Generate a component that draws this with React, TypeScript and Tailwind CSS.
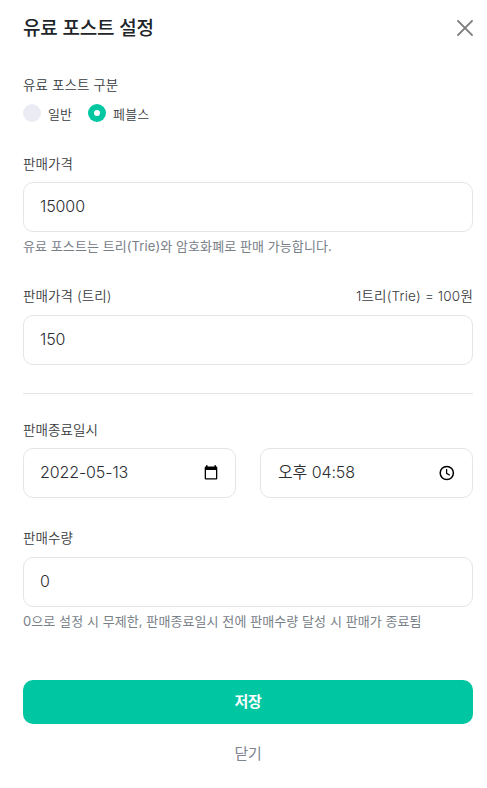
import React, { useState } from "react";

const fieldClass =
  "flex h-[50px] w-full items-center rounded-[10px] border border-[#e5e5e7] bg-white px-4 pb-0.5 text-[16px] font-[350] tracking-[-0.1px] text-[#2b2e33]";

function CloseIcon() {
  return (
    <svg width="16" height="16" viewBox="0 0 16 16" fill="none" stroke="#7c7c7e" strokeWidth="1.9">
      <path d="M0.4 0.4L15.6 15.6M15.6 0.4L0.4 15.6" />
    </svg>
  );
}

function CalendarIcon() {
  return (
    <svg className="mt-0.5" width="16" height="16" viewBox="0 0 16 16" fill="#000">
      <path d="M13 1.6V0.3h-1.6v1.3H4.6V0.3H3v1.3h-.2A1.1 1.1 0 0 0 1.7 2.7v10.7a1.1 1.1 0 0 0 1.1 1.1h10.4a1.1 1.1 0 0 0 1.1-1.1V2.7a1.1 1.1 0 0 0-1.1-1.1zM13 13.2H3V5h10z" />
    </svg>
  );
}

function ClockIcon() {
  return (
    <svg className="mt-0.5 mr-px" width="16" height="16" viewBox="0 0 16 16" fill="none" stroke="#000" strokeWidth="1.5">
      <circle cx="7.8" cy="8" r="6.6" />
      <path d="M7.6 4v4.3l3.2 2" strokeWidth="1.2" />
    </svg>
  );
}

function Radio({ checked }: { checked: boolean }) {
  if (!checked) return <span className="size-[18px] rounded-full bg-[#ebebf3]" />;
  return (
    <span className="flex size-[18px] items-center justify-center rounded-full bg-[#00c7a2]">
      <span className="size-[6px] rounded-full bg-white" />
    </span>
  );
}

export default function App() {
  const [kind, setKind] = useState("pebbles");
  const [price, setPrice] = useState("15000");
  const [trie, setTrie] = useState("150");
  const [amount, setAmount] = useState("0");

  return (
    <div className="flex h-[788px] w-[487px] flex-col bg-white pr-[14px] pl-[23px] font-['Inter','Noto_Sans_CJK_KR',sans-serif] text-[13.5px] leading-5 font-[350] tracking-[0.08px] text-[#383b40]">
      <header className="flex h-14 items-center justify-between">
        <h1 className="pt-px text-[19px] font-medium tracking-[-0.2px] text-[#212529]">유료 포스트 설정</h1>
        <button aria-label="닫기">
          <CloseIcon />
        </button>
      </header>

      <section className="mt-[19px]">
        <p>유료 포스트 구분</p>
        <div className="mt-2 flex h-5 items-center text-[13px] tracking-[0.08px]">
          <button className="flex items-center gap-[7px]" onClick={() => setKind("normal")}>
            <Radio checked={kind === "normal"} />
            <span className="pt-0.5">일반</span>
          </button>
          <button className="ml-4 flex items-center gap-[7px]" onClick={() => setKind("pebbles")}>
            <Radio checked={kind === "pebbles"} />
            <span className="pt-0.5">페블스</span>
          </button>
        </div>
      </section>

      <section className="mt-[31px]">
        <p className="mb-2">판매가격</p>
        <input className={fieldClass} value={price} onChange={(e) => setPrice(e.target.value)} />
        <p className="mt-1 text-[13px] font-normal text-[#788088]">유료 포스트는 트리(Trie)와 암호화폐로 판매 가능합니다.</p>
      </section>

      <section className="mt-[30px]">
        <div className="mb-[9px] flex justify-between">
          <p>판매가격 (트리)</p>
          <p className="tracking-[0.18px]">1트리(Trie) = 100원</p>
        </div>
        <input className={fieldClass} value={trie} onChange={(e) => setTrie(e.target.value)} />
      </section>

      <section className="mt-7 border-t border-[#e5e5e7] pt-[26px]">
        <p className="mb-2">판매종료일시</p>
        <div className="grid grid-cols-2 gap-6">
          <button className={fieldClass}>
            <span className="flex-1 text-left">2022-05-13</span>
            <CalendarIcon />
          </button>
          <button className={fieldClass}>
            <span className="flex-1 pl-px text-left">오후 04:58</span>
            <ClockIcon />
          </button>
        </div>
      </section>

      <section className="mt-[30px]">
        <p className="mb-[9px]">판매수량</p>
        <input className={fieldClass} value={amount} onChange={(e) => setAmount(e.target.value)} />
        <p className="mt-1 text-[13px] font-normal text-[#788088]">
          0으로 설정 시 무제한, 판매종료일시 전에 판매수량 달성 시 판매가 종료됨
        </p>
      </section>

      <button className="mt-[49px] h-11 rounded-[10px] bg-[#00c7a2] text-[15px] font-bold tracking-[-0.3px] text-white">
        저장
      </button>
      <button className="mt-2 h-11 text-[15px] font-normal tracking-[-0.3px] text-[#828491]">닫기</button>
    </div>
  );
}
